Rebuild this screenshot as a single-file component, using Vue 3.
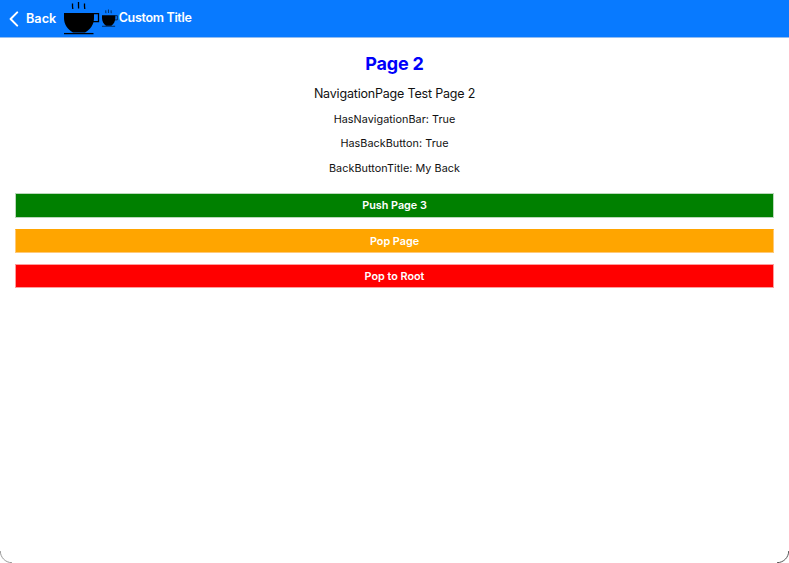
<script setup>
const details = ['HasNavigationBar: True', 'HasBackButton: True', 'BackButtonTitle: My Back']
const actions = [
  { label: 'Push Page 3', kind: 'push' },
  { label: 'Pop Page', kind: 'pop' },
  { label: 'Pop to Root', kind: 'root' },
]
const cups = ['cup-large', 'cup-small']
</script>

<template>
  <div class="window">
    <header class="navbar">
      <button class="back" type="button">
        <svg class="chevron" viewBox="0 0 10 16" aria-hidden="true">
          <path d="M8.2 1.4 1.6 8l6.6 6.6" />
        </svg>
        <span class="back-label">Back</span>
      </button>
      <svg
        v-for="cup in cups"
        :key="cup"
        class="cup"
        :class="cup"
        viewBox="0 0 36 34"
        preserveAspectRatio="none"
        aria-hidden="true"
      >
        <path d="M0 12h30v5c0 6-3.5 11.5-9 14.5H9C3.500 28.500 0 23 0 17z" />
        <path d="M0 32.600h29.500" class="line" />
        <path d="M29.500 12.600h5v8h-5.500" class="line" />
        <path d="M8.500 2.500v3l.3 2.500M14.500 1v3l.1 3.500M20.500 2.500v3l.3 2.500" class="line" />
      </svg>
      <span class="nav-title">Custom Title</span>
    </header>
    <main class="content">
      <h1>Page 2</h1>
      <p class="subtitle">NavigationPage Test Page 2</p>
      <p v-for="detail in details" :key="detail" class="detail">{{ detail }}</p>
      <div class="actions">
        <button v-for="action in actions" :key="action.kind" type="button" class="action" :class="action.kind">
          {{ action.label }}
        </button>
      </div>
    </main>
    <footer class="window-edge">
      <svg class="corner" viewBox="0 0 12 12" aria-hidden="true">
        <path d="M.3 0C.3 6 5 11.600 12 11.700" stroke="#999" />
      </svg>
      <svg class="corner" viewBox="0 0 12 12" aria-hidden="true">
        <path d="M11.700 0C11.700 6 7 11.600 0 11.700" stroke="#555" />
      </svg>
    </footer>
  </div>
</template>

<style>
body {
  margin: 0;
  background: #fff;
}
</style>

<style scoped>
.window {
  display: flex;
  flex-direction: column;
  height: 563px;
  overflow: hidden;
  font-family: Inter, "Liberation Sans", sans-serif;
  color: #111;
  background: #fff;
}
.navbar {
  box-sizing: border-box;
  display: flex;
  flex: none;
  align-items: flex-start;
  height: 38px;
  background: #087aff;
  border-bottom: 1px solid #93bdf0;
  color: #fff;
}
.back {
  display: flex;
  align-items: center;
  width: 64px;
  height: 37px;
  padding: 0 0 0 9px;
  border: 0;
  background: none;
  color: inherit;
  font-family: inherit;
}
.chevron {
  width: 10px;
  height: 16px;
  fill: none;
  stroke: #fff;
  stroke-width: 2;
  stroke-linecap: round;
  stroke-linejoin: round;
}
.back-label {
  margin-left: 7px;
  font-size: 12.700px;
  font-weight: 600;
  line-height: 16px;
}
.cup {
  flex: none;
  fill: #000;
}
.line {
  fill: none;
  stroke: #000;
  stroke-width: 1.300;
}
.cup-large {
  width: 36px;
  height: 34px;
  margin-top: 1px;
}
.cup-small {
  width: 16px;
  height: 18px;
  margin: 9px 0 0 1.700px;
}
.nav-title {
  margin-left: 1px;
  font-size: 12.500px;
  font-weight: 600;
  line-height: 36px;
  letter-spacing: -0.320px;
}
.content {
  flex: 1;
  padding: 15px 15px 0;
  text-align: center;
}
h1,
p {
  margin: 0;
}
h1 {
  font-size: 18px;
  font-weight: 700;
  line-height: 22px;
  letter-spacing: -0.200px;
  color: #0000fa;
}
.subtitle {
  margin-top: 10px;
  font-size: 12.500px;
  line-height: 17px;
  letter-spacing: -0.190px;
}
.detail {
  margin-top: 10.600px;
  font-size: 10.800px;
  line-height: 14px;
  letter-spacing: 0.050px;
}
.actions {
  display: grid;
  gap: 11px;
  margin-top: 17.200px;
}
.action {
  box-sizing: border-box;
  height: 24px;
  padding: 1px 0 0;
  border: 1px solid;
  color: #fff;
  font-family: inherit;
  font-size: 10.800px;
  font-weight: 600;
}
.push {
  height: 25px;
  background: #008000;
  border-color: #bad8ba;
}
.pop {
  background: #ffa500;
  border-color: #ffa500 #ffc978 #ffc978;
}
.root {
  background: #f00;
  border-color: #ff9c9c;
}
.window-edge {
  display: flex;
  justify-content: space-between;
}
.corner {
  width: 12px;
  height: 12px;
  fill: none;
}
</style>
